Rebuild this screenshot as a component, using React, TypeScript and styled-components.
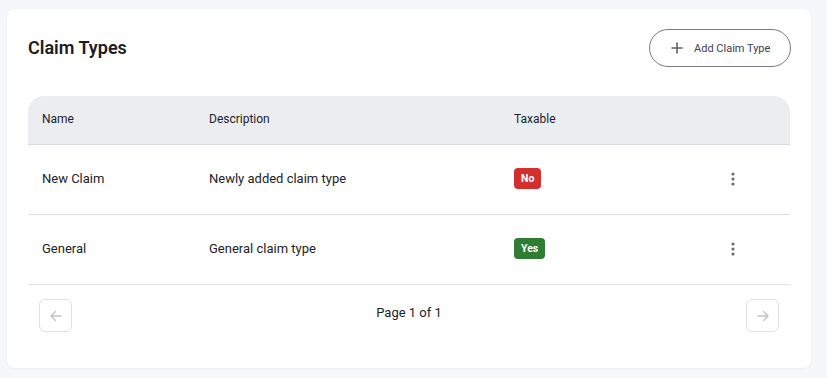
import styled, { createGlobalStyle } from "styled-components";

interface ClaimType {
  name: string;
  description: string;
  taxable: boolean;
}

const CLAIM_TYPES: ClaimType[] = [
  { name: "New Claim", description: "Newly added claim type", taxable: false },
  { name: "General", description: "General claim type", taxable: true },
];

const GlobalStyle = createGlobalStyle`
  body {
    margin: 0;
    background: #f6f7fb;
    font-family: Roboto, "Liberation Sans", sans-serif;
    color: #1f1f24;
  }
`;

const PlusIcon = () => (
  <svg width="12" height="12" viewBox="0 0 12 12" fill="none">
    <path d="M6 1v10M1 6h10" stroke="#5b5f6b" strokeWidth="1.6" strokeLinecap="round" />
  </svg>
);

const KebabIcon = () => (
  <svg width="4" height="14" viewBox="0 0 4 14">
    <circle cx="2" cy="2" r="1.6" fill="#6b6b70" />
    <circle cx="2" cy="7" r="1.6" fill="#6b6b70" />
    <circle cx="2" cy="12" r="1.6" fill="#6b6b70" />
  </svg>
);

const ArrowIcon = ({ dir }: { dir: "left" | "right" }) => (
  <svg width="14" height="14" viewBox="0 0 14 14" fill="none"
    style={{ transform: dir === "right" ? "scaleX(-1)" : undefined }}>
    <path d="M12 7H2.5M6.5 2.5L2 7l4.5 4.5" stroke="#c4c4c8" strokeWidth="1.4" strokeLinecap="round" strokeLinejoin="round" />
  </svg>
);

const App = () => {
  return (
    <>
      <GlobalStyle />
      <Page>
        <Card>
          <Header>
            <Title>Claim Types</Title>
            <AddButton>
              <PlusIcon />
              <span>Add Claim Type</span>
            </AddButton>
          </Header>

          <Table>
            <HeadRow>
              <HeadCell>Name</HeadCell>
              <HeadCell>Description</HeadCell>
              <HeadCell>Taxable</HeadCell>
              <HeadCell />
            </HeadRow>
            {CLAIM_TYPES.map((c) => (
              <Row key={c.name}>
                <Cell>{c.name}</Cell>
                <Cell>{c.description}</Cell>
                <Cell>
                  <Badge $yes={c.taxable}>{c.taxable ? "Yes" : "No"}</Badge>
                </Cell>
                <ActionCell>
                  <KebabButton>
                    <KebabIcon />
                  </KebabButton>
                </ActionCell>
              </Row>
            ))}
          </Table>

          <Pagination>
            <PageButton disabled>
              <ArrowIcon dir="left" />
            </PageButton>
            <PageText>Page 1 of 1</PageText>
            <PageButton disabled>
              <ArrowIcon dir="right" />
            </PageButton>
          </Pagination>
        </Card>
      </Page>
    </>
  );
};

const Page = styled.div`
  padding: 9px 16px 10px 7px;
`;

const Card = styled.div`
  background: #fff;
  border-radius: 8px;
  box-shadow: 0 1px 3px rgba(20, 30, 60, 0.04);
  padding: 20px 21px 36px 21px;
  height: 359px;
  box-sizing: border-box;
`;

const Header = styled.div`
  display: flex;
  justify-content: space-between;
  align-items: center;
  margin-bottom: 29px;
`;

const Title = styled.h2`
  margin: 0;
  font-size: 18px;
  font-weight: 600;
  color: #1c1c21;
  margin-top: -2px;
`;

const AddButton = styled.button`
  display: flex;
  align-items: center;
  gap: 11px;
  height: 38px;
  width: 142px;
  padding: 0 0 0 21px;
  border: 1px solid #7a7d86;
  border-radius: 19px;
  background: #fff;
  font-family: Roboto, "Liberation Sans", sans-serif;
  font-size: 11px;
  color: #3d4050;
  box-sizing: border-box;
  margin-right: -1px;
`;

const Table = styled.div`
  display: flex;
  flex-direction: column;
`;

const HeadRow = styled.div`
  display: grid;
  grid-template-columns: 167px 305px 1fr 116px;
  align-items: center;
  height: 48px;
  background: #ecedf1;
  border-radius: 16px 16px 0 0;
  border-bottom: 1px solid #d9dbe1;
`;

const HeadCell = styled.div`
  padding-left: 14px;
  font-size: 12px;
  color: #22222a;
  margin-top: -2px;
`;

const Row = styled.div`
  display: grid;
  grid-template-columns: 167px 305px 1fr 116px;
  align-items: center;
  height: 69px;
  border-bottom: 1px solid #e0e0e3;
`;

const Cell = styled.div`
  padding-left: 14px;
  font-size: 13px;
  color: #22222a;
  margin-top: -2px;
`;

const ActionCell = styled.div`
  display: flex;
  justify-content: center;
  margin-left: 2px;
  margin-top: -2px;
`;

const KebabButton = styled.button`
  border: none;
  background: none;
  padding: 0;
  display: flex;
`;

const Badge = styled.span<{ $yes: boolean }>`
  display: inline-flex;
  align-items: center;
  justify-content: center;
  height: 21px;
  padding: 0 7px;
  border-radius: 4px;
  background: ${(p) => (p.$yes ? "#2e7d32" : "#d32f2f")};
  color: #fff;
  font-size: 10.5px;
  font-weight: 700;
`;

const Pagination = styled.div`
  display: flex;
  justify-content: space-between;
  align-items: center;
  padding: 14px 11px 0 11px;
`;

const PageButton = styled.button`
  width: 33px;
  height: 33px;
  border: 1px solid #e2e2e5;
  border-radius: 6px;
  background: #fff;
  display: flex;
  align-items: center;
  justify-content: center;
  padding: 0;
`;

const PageText = styled.span`
  font-size: 13px;
  color: #22222a;
  margin-top: -6px;
`;

export default App;
